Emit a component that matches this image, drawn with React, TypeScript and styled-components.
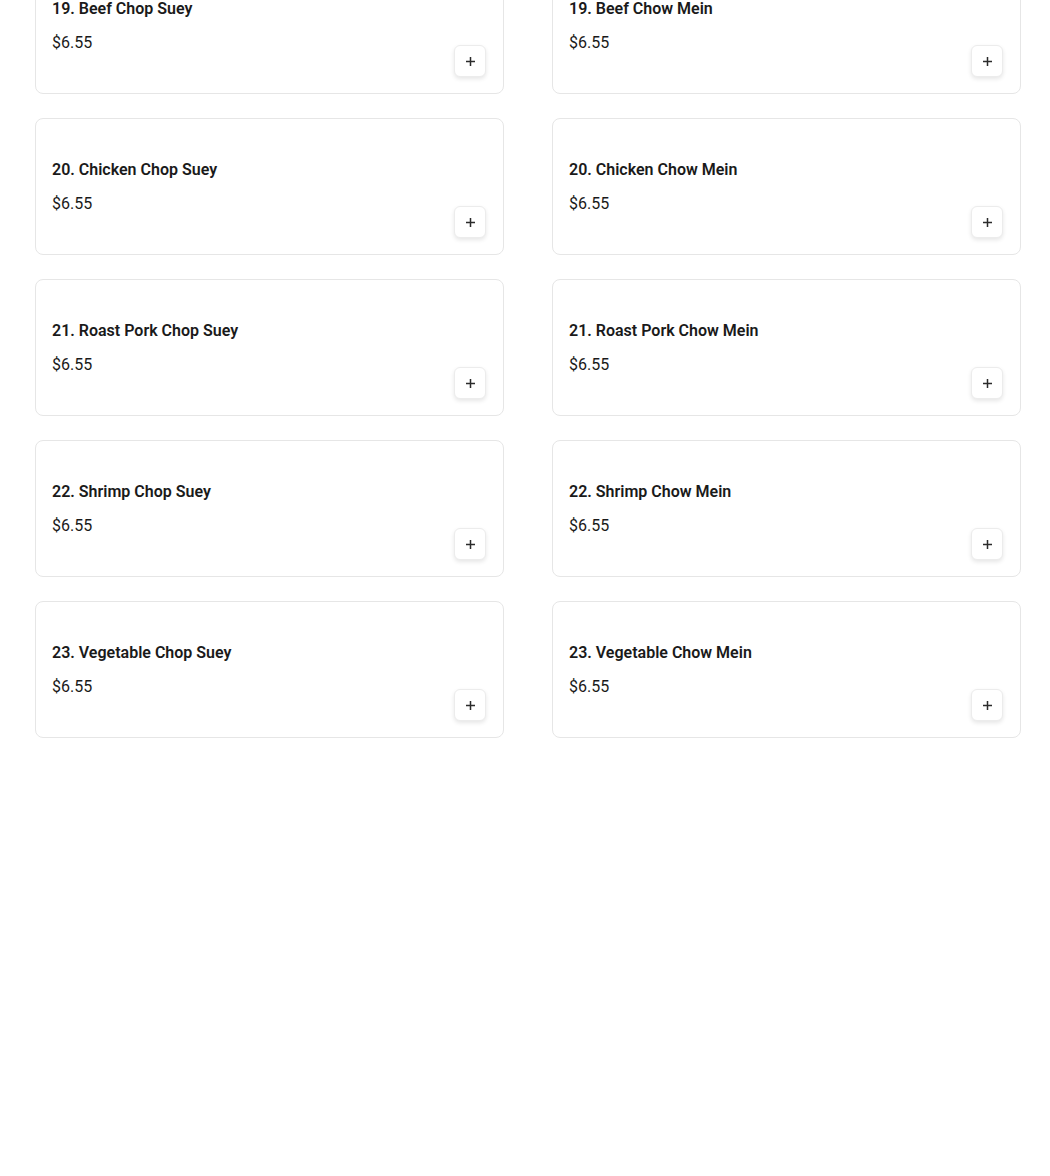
import React from 'react';
import styled, { createGlobalStyle } from 'styled-components';

const Global = createGlobalStyle`
  html, body {
    margin: 0;
    padding: 0;
    background: #ffffff;
    font-family: Roboto, "Liberation Sans", Arial, sans-serif;
    color: #1c1c1c;
  }
`;

const Page = styled.div`
  min-height: 1176px;
  overflow: hidden;
`;

// the list is scrolled: first row sits partly above the viewport
const Grid = styled.div`
  display: grid;
  grid-template-columns: 469px 469px;
  column-gap: 48px;
  row-gap: 24px;
  margin-top: -43px;
  padding-left: 35px;
`;

const Card = styled.div`
  box-sizing: border-box;
  height: 137px;
  border: 1px solid #e6e6e6;
  border-radius: 8px;
  background: #fff;
  padding: 39px 17px 16px 16px;
  display: flex;
  align-items: flex-end;
  justify-content: space-between;
`;

const Info = styled.div`
  align-self: flex-start;
  display: flex;
  flex-direction: column;
  gap: 10px;
`;

const Name = styled.div`
  font-size: 16px;
  line-height: 24px;
  font-weight: 600;
  color: #1a1a1a;
`;

const Price = styled.div`
  font-size: 16px;
  line-height: 24px;
  font-weight: 400;
  color: #1a1a1a;
`;

const AddButton = styled.button`
  width: 32px;
  height: 32px;
  padding: 0;
  border: 1px solid #ececec;
  border-radius: 6px;
  background: #fff;
  box-shadow: 0 2px 4px rgba(0, 0, 0, 0.1);
  display: grid;
  place-items: center;
  cursor: pointer;
`;

const PlusIcon = () => (
  <svg width="11" height="11" viewBox="0 0 11 11">
    <path d="M5.5 1v9M1 5.5h9" stroke="#2b2b2b" strokeWidth="1.5" />
  </svg>
);

const items: [string, string][] = [
  ['19. Beef Chop Suey', '19. Beef Chow Mein'],
  ['20. Chicken Chop Suey', '20. Chicken Chow Mein'],
  ['21. Roast Pork Chop Suey', '21. Roast Pork Chow Mein'],
  ['22. Shrimp Chop Suey', '22. Shrimp Chow Mein'],
  ['23. Vegetable Chop Suey', '23. Vegetable Chow Mein'],
];

export default function App() {
  return (
    <Page>
      <Global />
      <Grid>
        {items.flat().map((name) => (
          <Card key={name}>
            <Info>
              <Name>{name}</Name>
              <Price>$6.55</Price>
            </Info>
            <AddButton aria-label="Add">
              <PlusIcon />
            </AddButton>
          </Card>
        ))}
      </Grid>
    </Page>
  );
}
